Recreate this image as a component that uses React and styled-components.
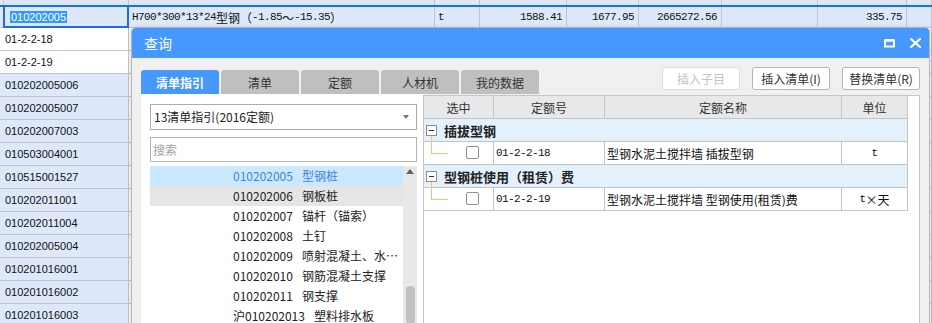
import React from "react";
import styled, { createGlobalStyle } from "styled-components";

const GlobalStyle = createGlobalStyle`
  html, body { margin: 0; padding: 0; background: #fff; }
  body { font-family: "Noto Sans CJK SC", "Liberation Sans", sans-serif; color: #222; }
  * { box-sizing: border-box; }
`;

const SHEET_COLS = "3px 126px 306px 45px 87px 72px 83px 96px 89px 25px";
const GRID_LINE = "#c4c4c4";
const SHEET_BLUE = "#dde8fa";
const TITLE_BLUE = "#4598fe";

const Screen = styled.div`
  position: relative;
  width: 932px;
  height: 323px;
  overflow: hidden;
  background: #fff;
`;

const Sheet = styled.div`
  display: flex;
  flex-direction: column;
`;

const SheetRow = styled.div`
  display: grid;
  grid-template-columns: ${SHEET_COLS};
  height: ${(p) => p.$h || 23}px;
  border-top: ${(p) => (p.$selected ? "2px solid #1a6fe6" : "none")};
  background: ${(p) => p.$bg || "#fff"};
`;

const SheetCell = styled.div`
  display: flex;
  align-items: center;
  justify-content: ${(p) => (p.$right ? "flex-end" : "flex-start")};
  padding: ${(p) => (p.$right ? "0 4px 0 0" : "0 0 0 3px")};
  border-right: 1px solid ${GRID_LINE};
  border-bottom: ${(p) => (p.$noBottom ? "none" : `1px solid ${GRID_LINE}`)};
  background: ${(p) => p.$bg || "transparent"};
  white-space: nowrap;
  overflow: hidden;
  font-family: "Liberation Mono", "Noto Sans CJK SC", monospace;
  font-size: 11px;
  letter-spacing: -0.6px;
  color: #111;
`;

const CodeCell = styled(SheetCell)`
  font-family: "Liberation Sans", "Noto Sans CJK SC", sans-serif;
  letter-spacing: 0;
  padding-left: 2px;
`;

const SelectedCodeCell = styled(CodeCell)`
  border: 2px solid #1a6fe6;
  border-top: none;
  padding-left: 5px;
`;

const Highlight = styled.span`
  background: #3399ff;
  color: #fff;
  padding: 0 1px;
`;

const Cjk = styled.span`
  font-family: "Noto Sans CJK SC", sans-serif;
  font-size: 12px;
  letter-spacing: 0;
`;

/* dialog */
const Dialog = styled.div`
  position: absolute;
  left: 131px;
  top: 28px;
  width: 799px;
  height: 300px;
  display: flex;
  flex-direction: column;
  background: #f0f0f0;
  border: 1px solid #b9b9b9;
  border-top: none;
  border-radius: 4px 4px 0 0;
  box-shadow: 0 0 4px rgba(0, 0, 0, 0.22);
`;

const TitleBar = styled.div`
  height: 30px;
  display: flex;
  align-items: center;
  padding: 0 8px 0 12px;
  background: ${TITLE_BLUE};
  border-radius: 4px 4px 0 0;
  color: #fff;
  font-size: 14px;
`;

const Title = styled.div`
  flex: 1;
`;

const TitleIcons = styled.div`
  display: flex;
  align-items: center;
  gap: 15px;
`;

const Toolbar = styled.div`
  height: 36px;
  display: flex;
  justify-content: space-between;
  padding: 0 9px;
`;

const Tabs = styled.div`
  display: flex;
  align-self: flex-end;
  gap: 2px;
`;

const Tab = styled.div`
  width: 78px;
  height: 24px;
  display: flex;
  align-items: center;
  justify-content: center;
  border-radius: 3px 3px 0 0;
  background: ${(p) => (p.$active ? TITLE_BLUE : "#bfbfbf")};
  color: ${(p) => (p.$active ? "#fff" : "#333")};
  font-size: 12px;
  font-weight: ${(p) => (p.$active ? 700 : 400)};
`;

const Buttons = styled.div`
  display: flex;
  gap: 12px;
  margin-top: 9px;
  align-self: flex-start;
`;

const Button = styled.div`
  width: 78px;
  height: 23px;
  display: flex;
  align-items: center;
  justify-content: center;
  background: #fff;
  border: 1px solid ${(p) => (p.$disabled ? "#dcdcdc" : "#b5b5b5")};
  border-radius: 3px;
  color: ${(p) => (p.$disabled ? "#c4c4c4" : "#333")};
  font-size: 12px;
`;

const Content = styled.div`
  flex: 1;
  display: flex;
  padding: 0 9px;
  min-height: 0;
`;

const LeftPane = styled.div`
  width: 282px;
  background: #fff;
  padding: 10px 6px 0 9px;
  display: flex;
  flex-direction: column;
`;

const Select = styled.div`
  height: 26px;
  display: flex;
  align-items: center;
  justify-content: space-between;
  padding: 0 7px 0 3px;
  border: 1px solid #ababab;
  font-size: 12px;
  color: #222;
`;

const Caret = styled.span`
  width: 0;
  height: 0;
  border-left: 3.5px solid transparent;
  border-right: 3.5px solid transparent;
  border-top: 4px solid #777;
`;

const Search = styled.div`
  height: 25px;
  margin-top: 7px;
  display: flex;
  align-items: center;
  padding-left: 2px;
  border: 1px solid #b4b4b4;
  font-size: 12px;
  color: #a3a3a3;
`;

const ListBox = styled.div`
  height: 162px;
  margin-top: 4px;
  display: flex;
`;

const List = styled.div`
  flex: 1;
  min-width: 0;
`;

const ListItem = styled.div`
  height: 20px;
  display: flex;
  align-items: center;
  padding-left: 83px;
  background: ${(p) => (p.$active ? "#cce8ff" : p.$hover ? "#e5e5e5" : "transparent")};
  color: ${(p) => (p.$active ? "#3d86dc" : "#222")};
  font-size: 12px;
  white-space: nowrap;
`;

const ItemCode = styled.span`
  margin-right: 9px;
`;

const ItemName = styled.span`
  overflow: hidden;
  text-overflow: ellipsis;
  max-width: 97px;
`;

const ScrollBar = styled.div`
  width: 14px;
  background: #e8e8e8;
  display: flex;
  flex-direction: column;
  align-items: center;
`;

const ScrollUp = styled.span`
  margin-top: 3px;
  width: 0;
  height: 0;
  border-left: 4px solid transparent;
  border-right: 4px solid transparent;
  border-bottom: 5px solid #606060;
`;

const ScrollThumb = styled.span`
  margin-top: auto;
  margin-bottom: 3px;
  width: 9px;
  height: 38px;
  border-radius: 4px;
  background: #c1c1c1;
`;

const RightPane = styled.div`
  flex: 1;
  margin-top: 1px;
  background: #fff;
  border: 1px solid #c6c6c6;
  border-bottom: none;
`;

const Table = styled.div`
  width: 484px;
  display: grid;
  grid-template-columns: 70px 111px 237px 66px;
  grid-auto-rows: 23px;
`;

const HeadCell = styled.div`
  display: flex;
  align-items: center;
  justify-content: center;
  background: #e8e8e8;
  border-right: 1px solid ${GRID_LINE};
  border-bottom: 1px solid ${GRID_LINE};
  font-size: 12px;
  color: #333;
`;

const GroupRow = styled.div`
  grid-column: 1 / -1;
  display: flex;
  align-items: center;
  padding-left: 2px;
  background: #e3f1fd;
  border-right: 1px solid ${GRID_LINE};
  border-bottom: 1px solid ${GRID_LINE};
  font-size: 13px;
  font-weight: 700;
  color: #222;
`;

const MinusBox = styled.span`
  position: relative;
  width: 11px;
  height: 11px;
  margin-right: 7px;
  border: 1px solid #8c8c8c;
  background: #fff;

  &::after {
    content: "";
    position: absolute;
    left: 2px;
    right: 2px;
    top: 4px;
    height: 1px;
    background: #333;
  }
`;

const Cell = styled.div`
  position: relative;
  display: flex;
  align-items: center;
  justify-content: ${(p) => (p.$center ? "center" : "flex-start")};
  padding-left: ${(p) => (p.$center ? 0 : 2)}px;
  border-right: 1px solid ${GRID_LINE};
  border-bottom: 1px solid ${GRID_LINE};
  font-size: 12px;
  color: #111;
  white-space: nowrap;
`;

const MonoText = styled.span`
  font-family: "Liberation Mono", monospace;
  font-size: 11px;
  letter-spacing: -0.6px;
`;

const TreeLine = styled.span`
  position: absolute;
  left: 7px;
  top: -6px;
  width: 17px;
  height: 18px;
  border-left: 1px solid #f5c27a;
  border-bottom: 1px solid #f5c27a;
`;

const CheckBox = styled.span`
  position: absolute;
  left: 42px;
  top: 4px;
  width: 13px;
  height: 13px;
  border: 1px solid #8f8f8f;
  border-radius: 2px;
  background: #fff;
`;

const codes = [
  { code: "01-2-2-18", white: true },
  { code: "01-2-2-19", white: true },
  { code: "010202005006" },
  { code: "010202005007" },
  { code: "010202007003" },
  { code: "010503004001" },
  { code: "010515001527" },
  { code: "010202011001" },
  { code: "010202011004" },
  { code: "010202005004" },
  { code: "010201016001" },
  { code: "010201016002" },
  { code: "010201016003" },
];

const listItems = [
  { code: "010202005", name: "型钢桩", active: true },
  { code: "010202006", name: "钢板桩", hover: true },
  { code: "010202007", name: "锚杆（锚索）" },
  { code: "010202008", name: "土钉" },
  { code: "010202009", name: "喷射混凝土、水泥砂浆" },
  { code: "010202010", name: "钢筋混凝土支撑" },
  { code: "010202011", name: "钢支撑" },
  { code: "沪010202013", name: "塑料排水板" },
];

const groups = [
  { title: "插拔型钢", code: "01-2-2-18", name: "型钢水泥土搅拌墙 插拔型钢", unit: "t" },
  { title: "型钢桩使用（租赁）费", code: "01-2-2-19", name: "型钢水泥土搅拌墙 型钢使用(租赁)费", unit: "t×天" },
];

function MaximizeIcon() {
  return (
    <svg width="11" height="9" viewBox="0 0 11 9">
      <rect x="1" y="1.5" width="9" height="6" fill="none" stroke="#fff" strokeWidth="2" />
      <rect x="1" y="0" width="9" height="2.5" fill="#fff" />
    </svg>
  );
}

function CloseIcon() {
  return (
    <svg width="11" height="10" viewBox="0 0 11 10">
      <path d="M1 1 L10 9 M10 1 L1 9" stroke="#fff" strokeWidth="2.2" strokeLinecap="square" />
    </svg>
  );
}

function SpreadSheet() {
  return (
    <Sheet>
      <SheetRow $h={5} $bg={SHEET_BLUE}>
        {Array.from({ length: 10 }).map((_, i) => (
          <SheetCell key={i} $noBottom />
        ))}
      </SheetRow>
      <SheetRow $selected $bg={SHEET_BLUE}>
        <SheetCell />
        <SelectedCodeCell>
          <Highlight>010202005</Highlight>
        </SelectedCodeCell>
        <SheetCell>
          H700*300*13*24<Cjk>型钢（</Cjk>-1.85<Cjk>～</Cjk>-15.35<Cjk>）</Cjk>
        </SheetCell>
        <SheetCell>t</SheetCell>
        <SheetCell $right>1588.41</SheetCell>
        <SheetCell $right>1677.95</SheetCell>
        <SheetCell $right>2665272.56</SheetCell>
        <SheetCell />
        <SheetCell $right>335.75</SheetCell>
        <SheetCell />
      </SheetRow>
      {codes.map((row) => (
        <SheetRow key={row.code}>
          <SheetCell $bg={row.white ? "#fff" : SHEET_BLUE} />
          <CodeCell $bg={row.white ? "#fff" : SHEET_BLUE}>{row.code}</CodeCell>
          {Array.from({ length: 8 }).map((_, i) => (
            <SheetCell key={i} />
          ))}
        </SheetRow>
      ))}
    </Sheet>
  );
}

function QueryDialog() {
  return (
    <Dialog>
      <TitleBar>
        <Title>查询</Title>
        <TitleIcons>
          <MaximizeIcon />
          <CloseIcon />
        </TitleIcons>
      </TitleBar>
      <Toolbar>
        <Tabs>
          <Tab $active>清单指引</Tab>
          <Tab>清单</Tab>
          <Tab>定额</Tab>
          <Tab>人材机</Tab>
          <Tab>我的数据</Tab>
        </Tabs>
        <Buttons>
          <Button $disabled>插入子目</Button>
          <Button>插入清单(I)</Button>
          <Button>替换清单(R)</Button>
        </Buttons>
      </Toolbar>
      <Content>
        <LeftPane>
          <Select>
            <span>13清单指引(2016定额)</span>
            <Caret />
          </Select>
          <Search>搜索</Search>
          <ListBox>
            <List>
              {listItems.map((item) => (
                <ListItem key={item.code} $active={item.active} $hover={item.hover}>
                  <ItemCode>{item.code}</ItemCode>
                  <ItemName>{item.name}</ItemName>
                </ListItem>
              ))}
            </List>
            <ScrollBar>
              <ScrollUp />
              <ScrollThumb />
            </ScrollBar>
          </ListBox>
        </LeftPane>
        <RightPane>
          <Table>
            <HeadCell>选中</HeadCell>
            <HeadCell>定额号</HeadCell>
            <HeadCell>定额名称</HeadCell>
            <HeadCell>单位</HeadCell>
            {groups.map((g) => (
              <React.Fragment key={g.code}>
                <GroupRow>
                  <MinusBox />
                  {g.title}
                </GroupRow>
                <Cell>
                  <TreeLine />
                  <CheckBox />
                </Cell>
                <Cell>
                  <MonoText>{g.code}</MonoText>
                </Cell>
                <Cell>{g.name}</Cell>
                <Cell $center>
                  <MonoText>t</MonoText>
                  {g.unit.slice(1)}
                </Cell>
              </React.Fragment>
            ))}
          </Table>
        </RightPane>
      </Content>
    </Dialog>
  );
}

export default function App() {
  return (
    <>
      <GlobalStyle />
      <Screen>
        <SpreadSheet />
        <QueryDialog />
      </Screen>
    </>
  );
}
